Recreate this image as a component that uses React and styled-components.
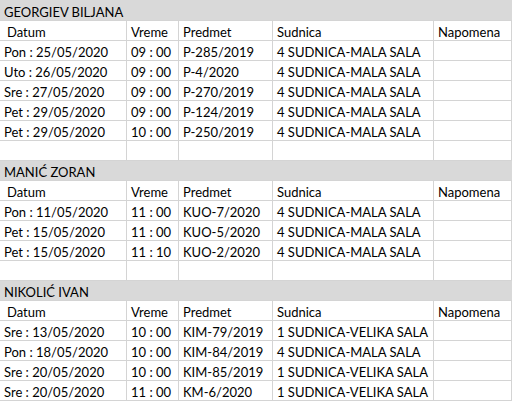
import React from "react";
import styled, { createGlobalStyle } from "styled-components";

const GlobalStyle = createGlobalStyle`
  html, body {
    margin: 0;
    padding: 0;
    background: #fff;
  }
`;

const Sheet = styled.div`
  display: grid;
  grid-template-columns: 127px 52px 94px 161px 78px;
  width: 512px;
  font-family: Lato, "Liberation Sans", sans-serif;
  font-size: 13px;
  color: #000;
`;

const Title = styled.div`
  grid-column: 1 / -1;
  height: ${(p) => (p.$first ? 21 : 20)}px;
  box-sizing: border-box;
  background: #d9d9d9;
  border-bottom: 1px solid #d4d4d4;
  padding: ${(p) => (p.$first ? 3 : 2)}px 0 0 4px;
  line-height: 18px;
  white-space: nowrap;
`;

const Cell = styled.div`
  height: 20px;
  box-sizing: border-box;
  border-right: 1px solid #d4d4d4;
  border-bottom: 1px solid #d4d4d4;
  padding: 2px 0 0 ${(p) => p.$indent || 4}px;
  line-height: 18px;
  white-space: nowrap;
  overflow: hidden;
`;

const sections = [
  {
    name: "GEORGIEV BILJANA",
    rows: [
      ["Pon : 25/05/2020", "09 : 00", "P-285/2019", "4 SUDNICA-MALA SALA"],
      ["Uto : 26/05/2020", "09 : 00", "P-4/2020", "4 SUDNICA-MALA SALA"],
      ["Sre : 27/05/2020", "09 : 00", "P-270/2019", "4 SUDNICA-MALA SALA"],
      ["Pet : 29/05/2020", "09 : 00", "P-124/2019", "4 SUDNICA-MALA SALA"],
      ["Pet : 29/05/2020", "10 : 00", "P-250/2019", "4 SUDNICA-MALA SALA"],
    ],
  },
  {
    name: "MANIĆ ZORAN",
    rows: [
      ["Pon : 11/05/2020", "11 : 00", "KUO-7/2020", "4 SUDNICA-MALA SALA"],
      ["Pet : 15/05/2020", "11 : 00", "KUO-5/2020", "4 SUDNICA-MALA SALA"],
      ["Pet : 15/05/2020", "11 : 10", "KUO-2/2020", "4 SUDNICA-MALA SALA"],
    ],
  },
  {
    name: "NIKOLIĆ IVAN",
    rows: [
      ["Sre : 13/05/2020", "10 : 00", "KIM-79/2019", "1 SUDNICA-VELIKA SALA"],
      ["Pon : 18/05/2020", "10 : 00", "KIM-84/2019", "4 SUDNICA-MALA SALA"],
      ["Sre : 20/05/2020", "10 : 00", "KIM-85/2019", "1 SUDNICA-VELIKA SALA"],
      ["Sre : 20/05/2020", "11 : 00", "KM-6/2020", "1 SUDNICA-VELIKA SALA"],
    ],
  },
];

const headers = ["Datum", "Vreme", "Predmet", "Sudnica", "Napomena"];

export default function App() {
  return (
    <>
      <GlobalStyle />
      <Sheet>
        {sections.map((s, si) => (
          <React.Fragment key={s.name}>
            <Title $first={si === 0}>{s.name}</Title>
            {headers.map((h, i) => (
              <Cell key={h} $indent={i === 0 ? 7 : 4}>
                {h}
              </Cell>
            ))}
            {s.rows.map((r, ri) =>
              [...r, ""].map((v, ci) => <Cell key={ri + "-" + ci}>{v}</Cell>)
            )}
            {si < sections.length - 1 &&
              headers.map((h) => <Cell key={"e" + h} />)}
          </React.Fragment>
        ))}
      </Sheet>
    </>
  );
}
